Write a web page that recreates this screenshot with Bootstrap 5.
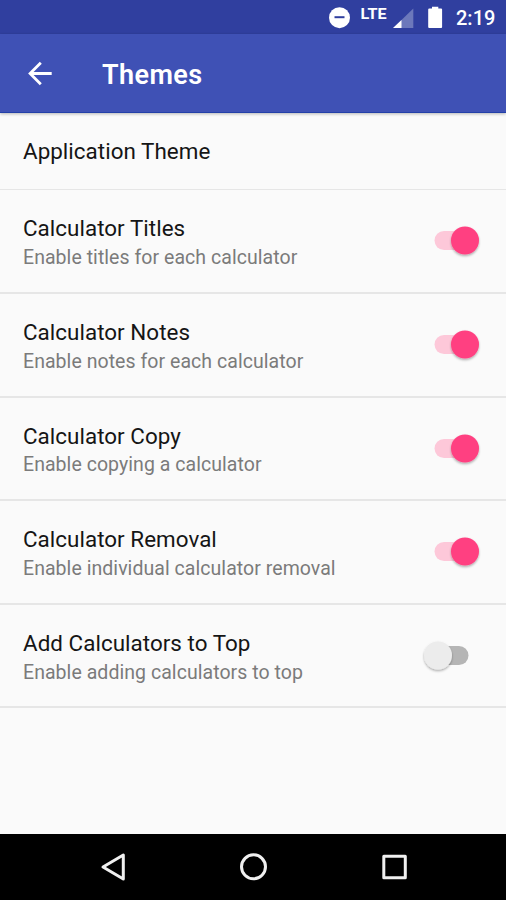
<!DOCTYPE html>
<html lang="en">
<head>
<meta charset="utf-8">
<meta name="viewport" content="width=device-width, initial-scale=1">
<title>Themes</title>
<link href="https://cdn.jsdelivr.net/npm/bootstrap@5.3.0/dist/css/bootstrap.min.css" rel="stylesheet">
<style>
body{font-family:Roboto,"Noto Sans",sans-serif;background:#fafafa;color:#151515}
.phone{height:900px;overflow:hidden}
.status-bar{height:34px;background:#303f9f}
.status-bar svg{width:140px;height:34px}
.clock{font-size:20px;font-weight:500;line-height:34px;width:50px;padding-top:1px}
.lte{font-size:14.5px;font-weight:700}
.app-bar{height:79px;background:#3f51b5;border-bottom:1px solid #2340a8;box-shadow:0 1px 3px rgba(0,0,0,.28);padding-left:24px}
.app-bar h1{font-size:27px;font-weight:600;line-height:32px;letter-spacing:.4px;margin-left:46px;padding-top:3px}
.setting{height:103.6px;border-bottom:2px solid #e6e6e6;padding:22px 24px 0 23px}
.setting.single{height:77px;border-bottom-width:1px;padding-top:22px}
.setting.single + .setting{height:104px}
.setting-title{font-size:22.4px;line-height:32px;letter-spacing:.04px}
.setting-note{font-size:19.5px;line-height:26px;color:#7b7b7b;letter-spacing:.05px;margin-top:.9px}
.toggle{width:62px;height:40px;margin-top:8px}
.nav-keys{height:66px;background:#000}
.nav-keys svg{width:506px;height:66px}
</style>
<script src="https://cdn.jsdelivr.net/npm/bootstrap@5.3.0/dist/js/bootstrap.bundle.min.js"></script>
</head>
<body>
<div class="phone d-flex flex-column">
  <div class="status-bar d-flex justify-content-end text-white flex-shrink-0">
    <svg viewBox="316 0 140 34" aria-hidden="true">
      <circle cx="339.500" cy="17.700" r="10.500" fill="#fff"/><path d="M334.500 17.200h10" stroke="#303f9f" stroke-width="2"/>
      <text class="lte" x="360.500" y="18.500" fill="#fff" textLength="26" lengthAdjust="spacingAndGlyphs">LTE</text>
      <path d="M413.300 8.500v19.500h-20z" fill="#6c78bb"/><path d="M401.500 20v8h-8.500z" fill="#fff"/>
      <path d="M429.200 8.500h2.800V6.700h6.300v1.800h2.800q1 0 1 1v17.500q0 1-1 1h-11.900q-1 0-1-1v-17.500q0-1 1-1z" fill="#fff"/>
    </svg>
    <span class="clock">2:19</span>
  </div>
  <header class="app-bar d-flex align-items-center text-white flex-shrink-0">
    <svg width="32" height="32" viewBox="0 0 32 32" aria-label="Back"><path d="M27.700 16.500H6.500M16.800 5.800 6.100 16.500l10.700 10.700" fill="none" stroke="#fff" stroke-width="2.800"/></svg>
    <h1 class="mb-0">Themes</h1>
  </header>
  <main class="flex-grow-1">
    <div class="setting single"><div class="setting-title">Application Theme</div></div>
    <div class="setting d-flex justify-content-between"><div><div class="setting-title">Calculator Titles</div><div class="setting-note">Enable titles for each calculator</div></div><svg class="toggle"><use href="#on"/></svg></div>
    <div class="setting d-flex justify-content-between"><div><div class="setting-title">Calculator Notes</div><div class="setting-note">Enable notes for each calculator</div></div><svg class="toggle"><use href="#on"/></svg></div>
    <div class="setting d-flex justify-content-between"><div><div class="setting-title">Calculator Copy</div><div class="setting-note">Enable copying a calculator</div></div><svg class="toggle"><use href="#on"/></svg></div>
    <div class="setting d-flex justify-content-between"><div><div class="setting-title">Calculator Removal</div><div class="setting-note">Enable individual calculator removal</div></div><svg class="toggle"><use href="#on"/></svg></div>
    <div class="setting d-flex justify-content-between"><div><div class="setting-title">Add Calculators to Top</div><div class="setting-note">Enable adding calculators to top</div></div><svg class="toggle"><use href="#off"/></svg></div>
  </main>
  <nav class="nav-keys flex-shrink-0">
    <svg viewBox="0 0 506 66" fill="none" stroke="#f0f0f0" stroke-width="3" stroke-linejoin="round" aria-label="Back, Home, Recent apps"><path d="M123.300 21v24L103 33z"/><circle cx="253.500" cy="32.800" r="12"/><path d="M383.800 22.300h21.500v21.500h-21.500z"/></svg>
  </nav>
</div>
<svg width="0" height="0" class="d-block">
  <defs>
    <filter id="lift" x="-30%" y="-30%" width="160%" height="160%"><feDropShadow dx="0" dy="1.500" stdDeviation="1.300" flood-opacity=".32"/></filter>
    <g id="on"><rect x="14.500" y="11" width="34" height="19" rx="9.500" fill="#fdc8d9"/><circle cx="45" cy="20.500" r="14" fill="#ff4081" filter="url(#lift)"/></g>
    <g id="off"><rect x="14.500" y="11" width="34" height="19" rx="9.500" fill="#b5b5b5"/><circle cx="18" cy="20.500" r="14" fill="#ececec" filter="url(#lift)"/></g>
  </defs>
</svg>
</body>
</html>
